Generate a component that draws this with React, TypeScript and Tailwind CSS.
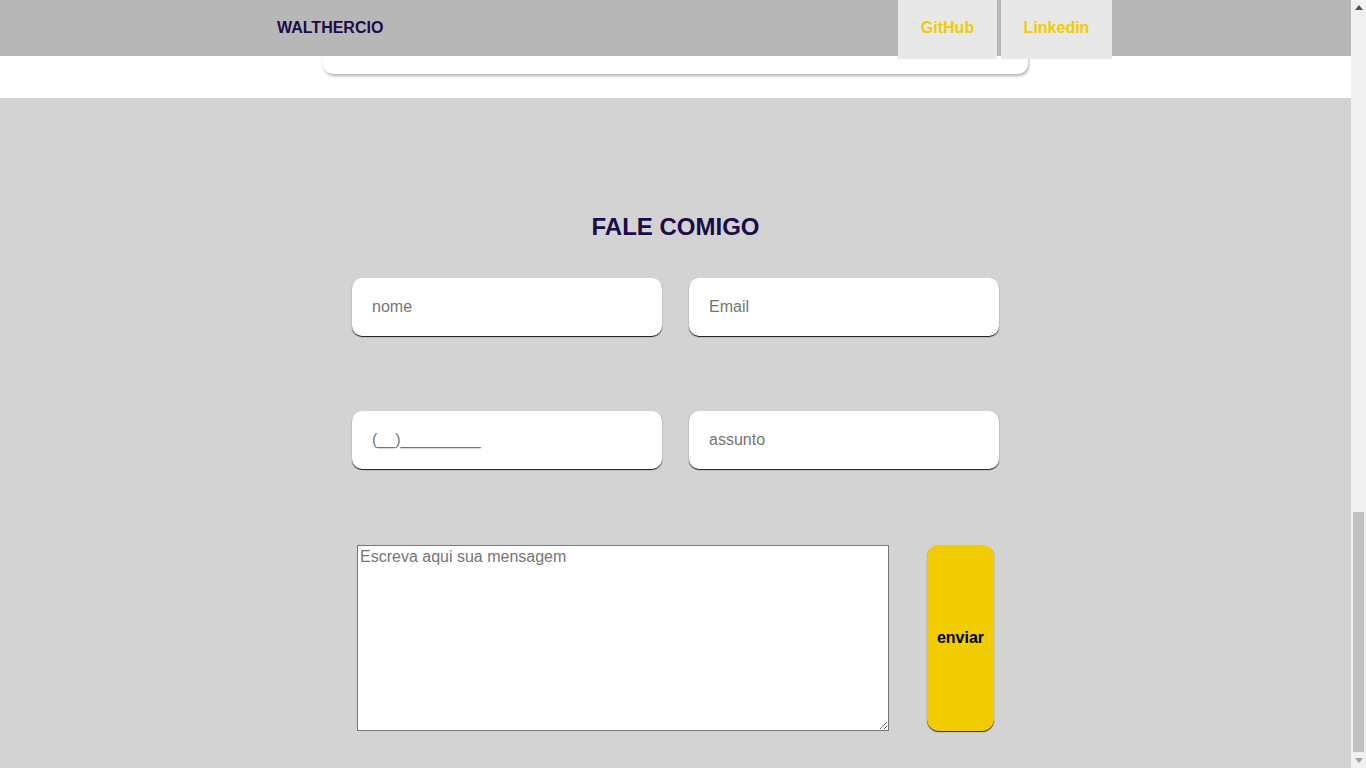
const font = { fontFamily: '"Liberation Sans", Arial, sans-serif' };

function Field({ placeholder }: { placeholder: string }) {
  return (
    <input
      type="text"
      placeholder={placeholder}
      className="w-[310px] h-[58px] rounded-[10px] bg-white pl-5 text-base text-black placeholder:text-[#757575] outline-none shadow-[0_1px_1px_rgba(0,0,0,0.9)]"
    />
  );
}

function Scrollbar() {
  return (
    <div className="w-[15px] h-[768px] bg-[#f1f1f1] flex flex-col items-center">
      <div className="h-[15px] flex items-center justify-center">
        <svg width="8" height="5" viewBox="0 0 8 5">
          <polygon points="0,5 8,5 4,0" fill="#505050" />
        </svg>
      </div>
      <div className="flex-1" />
      <div className="w-[11px] h-[240px] bg-[#c1c1c1]" />
      <div className="h-[16px] flex items-center justify-center">
        <svg width="8" height="5" viewBox="0 0 8 5">
          <polygon points="0,0 8,0 4,5" fill="#a3a3a3" />
        </svg>
      </div>
    </div>
  );
}

export default function App() {
  return (
    <div className="flex h-[768px] overflow-hidden" style={font}>
      <div className="flex-1 flex flex-col">
        <header className="relative z-10 h-[56px] bg-[#b7b7b7] flex items-start">
          <div className="h-[56px] flex items-center pl-[277px] flex-1">
            <span className="text-base font-bold text-[#1c0a4a]">WALTHERCIO</span>
          </div>
          <nav className="flex gap-[4px] mr-[239px]">
            <a className="w-[99px] h-[59px] pb-[3px] bg-[#e8e8e8] flex items-center justify-center text-base font-bold text-[#f0cc00]">
              GitHub
            </a>
            <a className="w-[111px] h-[59px] pb-[3px] bg-[#e8e8e8] flex items-center justify-center text-base font-bold text-[#f0cc00]">
              Linkedin
            </a>
          </nav>
        </header>

        <div className="h-[42px] bg-white flex justify-center">
          <div className="w-[705px] h-[18px] bg-white rounded-b-[10px] shadow-[1px_2px_3px_rgba(0,0,0,0.3)]" />
        </div>

        <section className="flex-1 bg-[#d3d3d3] flex flex-col items-center pt-[115px]">
          <h2 className="text-2xl font-bold text-[#1c0a4a] leading-7">FALE COMIGO</h2>
          <div className="mt-[37px] grid grid-cols-2 gap-x-[27px] gap-y-[75px]">
            <Field placeholder="nome" />
            <Field placeholder="Email" />
            <Field placeholder="(__)_________" />
            <Field placeholder="assunto" />
          </div>
          <div className="mt-[76px] w-[637px] flex items-stretch justify-between">
            <textarea
              placeholder="Escreva aqui sua mensagem"
              className="w-[532px] h-[186px] bg-white border border-[#767676] p-[2px] text-base leading-[normal] placeholder:text-[#757575] outline-none resize"
            />
            <button className="w-[67px] h-[186px] bg-[#f0cc00] rounded-[12px] text-base font-bold text-black shadow-[0_1px_1px_rgba(0,0,0,0.8)]">
              enviar
            </button>
          </div>
        </section>
      </div>
      <Scrollbar />
    </div>
  );
}
